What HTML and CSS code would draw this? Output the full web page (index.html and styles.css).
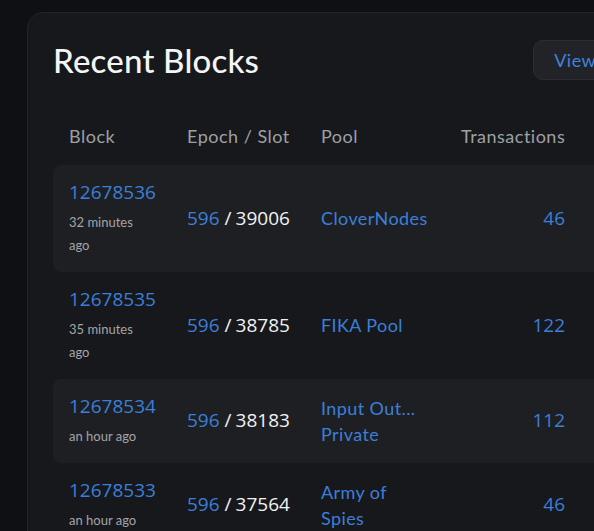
FILE: index.html
```html
<!DOCTYPE html>
<html lang="en">
<head>
<meta charset="utf-8">
<title>Recent Blocks</title>
<link rel="stylesheet" href="styles.css">
</head>
<body>
<section class="card">
  <header class="card-head">
    <h2 class="title">Recent Blocks</h2>
    <button class="view-btn">View all</button>
  </header>
  <div class="table">
    <div class="row head">
      <div class="cell">Block</div>
      <div class="cell">Epoch / Slot</div>
      <div class="cell">Pool</div>
      <div class="cell">Transactions</div>
      <div class="cell"></div>
    </div>
    <div class="row alt">
      <div class="cell"><a class="num link">12678536</a><div class="time">32 minutes ago</div></div>
      <div class="cell epoch"><span class="num link">596</span><span class="num sep">/</span><span class="num">39006</span></div>
      <div class="cell"><a class="link pool">CloverNodes</a></div>
      <div class="cell right"><span class="num link">46</span></div>
      <div class="cell"></div>
    </div>
    <div class="row">
      <div class="cell"><a class="num link">12678535</a><div class="time">35 minutes ago</div></div>
      <div class="cell epoch"><span class="num link">596</span><span class="num sep">/</span><span class="num">38785</span></div>
      <div class="cell"><a class="link pool">FIKA Pool</a></div>
      <div class="cell right"><span class="num link">122</span></div>
      <div class="cell"></div>
    </div>
    <div class="row alt">
      <div class="cell"><a class="num link">12678534</a><div class="time">an hour ago</div></div>
      <div class="cell epoch"><span class="num link">596</span><span class="num sep">/</span><span class="num">38183</span></div>
      <div class="cell"><a class="link pool">Input Out... Private</a></div>
      <div class="cell right"><span class="num link">112</span></div>
      <div class="cell"></div>
    </div>
    <div class="row">
      <div class="cell"><a class="num link">12678533</a><div class="time">an hour ago</div></div>
      <div class="cell epoch"><span class="num link">596</span><span class="num sep">/</span><span class="num">37564</span></div>
      <div class="cell"><a class="link pool">Army of Spies</a></div>
      <div class="cell right"><span class="num link">46</span></div>
      <div class="cell"></div>
    </div>
  </div>
</section>
</body>
</html>
```
FILE: styles.css
```css
html, body {
  margin: 0;
  padding: 0;
  background: #0f1013;
  overflow: hidden;
  height: 531px;
}
body {
  font-family: "Lato", "Noto Sans", sans-serif;
  color: #eeeff1;
}
.card {
  width: 800px;
  margin: 12px 0 0 27px;
  padding: 27px 25px 30px 25px;
  background: #17181c;
  border: 1px solid #232428;
  border-radius: 16px;
}
.card-head {
  display: flex;
  justify-content: space-between;
  align-items: center;
  height: 40px;
}
.title {
  margin: 0;
  font-size: 33px;
  font-weight: 500;
  line-height: 40px;
  color: #f4f5f6;
  letter-spacing: 0.2px;
}
.view-btn {
  height: 40px;
  margin-left: 274px;
  margin-right: auto;
  padding: 0 20px;
  background: #222328;
  border: 1px solid #2d2e33;
  border-radius: 10px;
  font-family: "Lato", sans-serif;
  font-size: 18px;
  letter-spacing: 0.5px;
  color: #3f84dc;
  white-space: nowrap;
}
.table {
  margin-top: 27px;
  display: flex;
  flex-direction: column;
}
.row {
  display: grid;
  grid-template-columns: 118px 134px 140px 136px 1fr;
  align-items: center;
  border-radius: 8px;
}
.row.alt {
  background: #1e1f23;
}
.cell {
  padding: 14px 16px 15px 16px;
}
.head .cell {
  padding: 16px;
  font-size: 18px;
  line-height: 26px;
  letter-spacing: 0.5px;
  color: #9ea0a5;
  white-space: nowrap;
}
.epoch {
  white-space: nowrap;
}
.num {
  font-family: "Open Sans", "Noto Sans", sans-serif;
  font-size: 19px;
  line-height: 27px;
  color: #f1f2f3;
}
.sep {
  margin: 0 4px 0 5px;
}
.link {
  color: #3b7fd8;
  text-decoration: none;
}
a.num {
  display: block;
}
.time {
  margin-top: 5px;
  font-size: 13px;
  line-height: 23px;
  color: #a3a5a9;
}
.pool {
  display: block;
  font-size: 18px;
  line-height: 26px;
  letter-spacing: 0.4px;
}
.right {
  text-align: right;
}
```
